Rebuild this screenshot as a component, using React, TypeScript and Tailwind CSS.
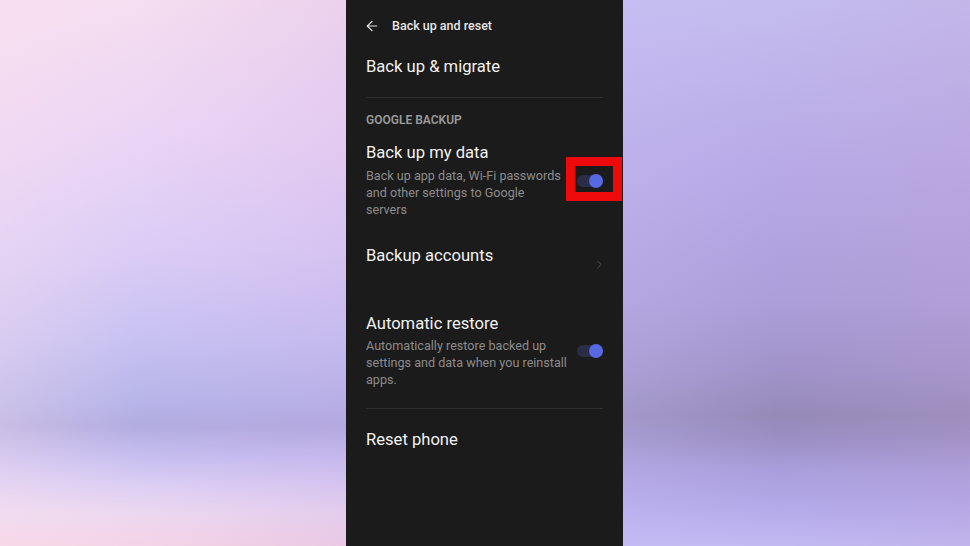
import { ArrowLeft, ChevronRight } from 'lucide-react';

function Toggle({ marked = false }: { marked?: boolean }) {
  return (
    <div className="relative w-[26px] h-[12px] shrink-0">
      <div className="absolute inset-0 rounded-full bg-[#2b2d46]" />
      <div className="absolute right-[0px] top-[-1px] w-[14px] h-[14px] rounded-full bg-[#5669e2]" />
      {marked && (
        <div className="absolute left-[-11px] right-[-19px] top-[-18px] bottom-[-14px] border-[9px] border-[#ee0a0a]" />
      )}
    </div>
  );
}

export default function App() {
  return (
    <div
      className="flex w-[970px] h-[546px] overflow-hidden"
      style={{ fontFamily: 'Roboto, "Noto Sans", sans-serif' }}
    >
      {/* left backdrop */}
      <div className="relative w-[346px] h-full bg-[linear-gradient(180deg,#f5def0_0%,#ebd5f5_25%,#dccdf6_45%,#c8c2f2_62%,#b6b4e8_74%,#b2ace0_78%,#c8c0f0_84%,#dccff4_89%,#ecd8f0_94%,#f4d4e6_100%)]">
        <div className="absolute inset-0 bg-[linear-gradient(90deg,rgba(255,228,238,0.3)_0%,rgba(255,255,255,0)_40%,rgba(190,150,220,0.18)_100%)]" />
      </div>

      {/* phone screen */}
      <div className="relative w-[277px] h-full bg-[#1b1b1b] px-5">
        <div className="h-[52px] flex items-center">
          <ArrowLeft size={16} strokeWidth={1.8} className="ml-[-2px] text-[#e2e2e2]" />
          <span className="ml-[12px] text-[12.5px] font-medium text-[#e6e6e6]">Back up and reset</span>
        </div>

        <div className="h-[30px] flex items-center text-[16.6px] text-[#f2f2f2]">Back up &amp; migrate</div>

        <div className="mt-[15px] border-t border-[#2f2f2f]" />

        <div className="mt-[14px] h-[16px] flex items-center text-[12px] font-semibold text-[#9a9a9a]">
          GOOGLE BACKUP
        </div>

        <div className="mt-[15px] flex items-center justify-between">
          <div className="w-[200px]">
            <div className="text-[16.6px] leading-[20px] text-[#f2f2f2]">Back up my data</div>
            <div className="mt-[4px] text-[12.6px] leading-[17px] text-[#8b8b8b]">
              Back up app data, Wi-Fi passwords and other settings to Google servers
            </div>
          </div>
          <Toggle marked />
        </div>

        <div className="mt-[28px] h-[20px] flex justify-between">
          <div className="text-[16.6px] leading-[20px] text-[#f2f2f2]">Backup accounts</div>
          <ChevronRight size={13} strokeWidth={1.6} className="mt-[12px] mr-[-3px] text-[#555555]" />
        </div>

        <div className="mt-[48px] flex items-center justify-between">
          <div className="w-[210px]">
            <div className="text-[16.6px] leading-[20px] text-[#f2f2f2]">Automatic restore</div>
            <div className="mt-[3px] text-[12.6px] leading-[17px] text-[#8b8b8b]">
              Automatically restore backed up settings and data when you reinstall apps.
            </div>
          </div>
          <Toggle />
        </div>

        <div className="mt-[20px] border-t border-[#2f2f2f]" />

        <div className="mt-[21px] text-[16.6px] leading-[20px] text-[#f2f2f2]">Reset phone</div>
      </div>

      {/* right backdrop */}
      <div className="relative flex-1 h-full bg-[linear-gradient(180deg,#c4bcef_0%,#b8aae6_30%,#ac9ed9_55%,#a093c9_68%,#958ab8_76%,#9a8ec2_80%,#a99edb_86%,#b4aaea_93%,#c2b9f2_100%)]">
        <div className="absolute inset-0 bg-[linear-gradient(90deg,rgba(205,195,250,0.25)_0%,rgba(255,255,255,0)_45%,rgba(190,160,210,0.22)_100%)]" />
      </div>
    </div>
  );
}
